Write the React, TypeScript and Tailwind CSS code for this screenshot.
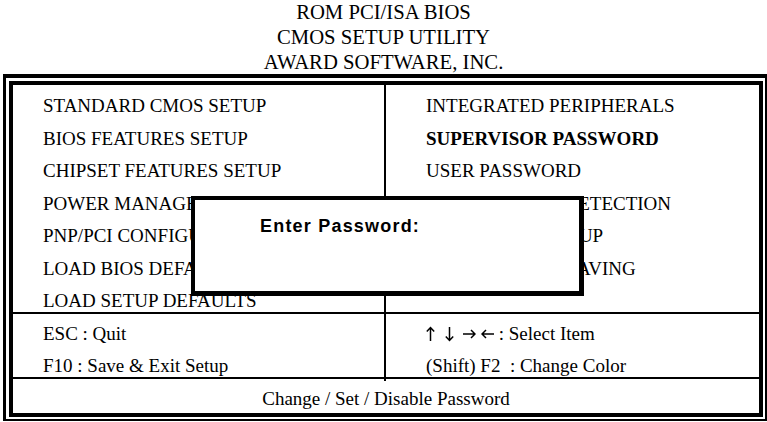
import React from 'react';

const LEFT_ITEMS = [
  'STANDARD CMOS SETUP',
  'BIOS FEATURES SETUP',
  'CHIPSET FEATURES SETUP',
  'POWER MANAGEMENT SETUP',
  'PNP/PCI CONFIGURATION',
  'LOAD BIOS DEFAULTS',
  'LOAD SETUP DEFAULTS',
];

const RIGHT_ITEMS = [
  { label: 'INTEGRATED PERIPHERALS' },
  { label: 'SUPERVISOR PASSWORD', bold: true },
  { label: 'USER PASSWORD' },
  { label: 'IDE HDD AUTO DETECTION' },
  { label: 'SAVE & EXIT SETUP' },
  { label: 'EXIT WITHOUT SAVING' },
  { label: '' },
];

const Arrow = ({ dir }: { dir: 'up' | 'down' | 'left' | 'right' }) => {
  if (dir === 'up' || dir === 'down') {
    const d = dir === 'up' ? 'M4.5 15V1.5M0.8 5.5L4.5 1.5L8.2 5.5' : 'M4.5 1V14.5M0.8 10.5L4.5 14.5L8.2 10.5';
    return (
      <svg width="9" height="16" viewBox="0 0 9 16" className="shrink-0">
        <path d={d} fill="none" stroke="black" strokeWidth="1.5" />
      </svg>
    );
  }
  const d = dir === 'right' ? 'M0 8H12M8 4L12 8L8 12' : 'M13 8H1M5 4L1 8L5 12';
  return (
    <svg width="13" height="16" viewBox="0 0 13 16" className="shrink-0">
      <path d={d} fill="none" stroke="black" strokeWidth="1.5" />
    </svg>
  );
};

export default function App() {
  return (
    <div className="relative w-[767px] h-[422px] overflow-hidden bg-white text-black font-['Liberation_Serif','Times_New_Roman',serif] text-[19px]">
      {/* Title block */}
      <header className="h-[74px] flex flex-col items-center leading-[25px] text-[20.7px]">
        <div>ROM PCI/ISA BIOS</div>
        <div>CMOS SETUP UTILITY</div>
        <div>AWARD SOFTWARE, INC.</div>
      </header>

      {/* Double frame */}
      <div className="ml-[3px] w-[764px] h-[347px] border-black border-t-4 border-l-[3px] border-r-2 border-b-2 pt-[3px] pl-[3px] pr-[2px] pb-[2px]">
        <div className="h-full border-4 border-black flex flex-col">
          {/* Menu */}
          <div className="h-[229px] grid grid-cols-[371px_1fr] border-b-2 border-black">
            <div className="pt-[5px] pl-[30px] leading-[32.5px] whitespace-nowrap">
              {LEFT_ITEMS.map((item) => (
                <div key={item}>{item}</div>
              ))}
            </div>
            <div className="pt-[5px] pl-[40px] leading-[32.5px] whitespace-nowrap border-l-2 border-black">
              {RIGHT_ITEMS.map((item, i) => (
                <div key={i} className={item.bold ? 'font-bold' : ''}>
                  {item.label || '\u00a0'}
                </div>
              ))}
            </div>
          </div>

          {/* Keys */}
          <div className="h-[65px] grid grid-cols-[371px_1fr] border-b-2 border-black">
            <div className="pt-[4px] pl-[30px] leading-[31.5px] whitespace-pre">
              <div>ESC : Quit</div>
              <div>F10 : Save &amp; Exit Setup</div>
            </div>
            <div className="pt-[4px] pl-[40px] leading-[31.5px] whitespace-pre border-l-2 border-black">
              <div className="flex items-center h-[31.5px]">
                <Arrow dir="up" />
                <span className="w-[10px]" />
                <Arrow dir="down" />
                <span className="w-[9px]" />
                <Arrow dir="right" />
                <span className="w-[5px]" />
                <Arrow dir="left" />
                <span> : Select Item</span>
              </div>
              <div>(Shift) F2  : Change Color</div>
            </div>
          </div>

          {/* Status line */}
          <div className="flex-1 pt-[4px] text-center leading-[32px]">
            Change / Set / Disable Password
          </div>
        </div>
      </div>

      {/* Password dialog */}
      <div className="absolute left-[191px] top-[196px] w-[393px] h-[100px] bg-white border-black border-t-4 border-l-4 border-r-[5px] border-b-[5px] pl-[65px] pt-[14px]">
        <div className="font-['Liberation_Sans',Arial,sans-serif] font-bold text-[18px] tracking-[1.2px] leading-[24px]">
          Enter Password:
        </div>
      </div>
    </div>
  );
}
